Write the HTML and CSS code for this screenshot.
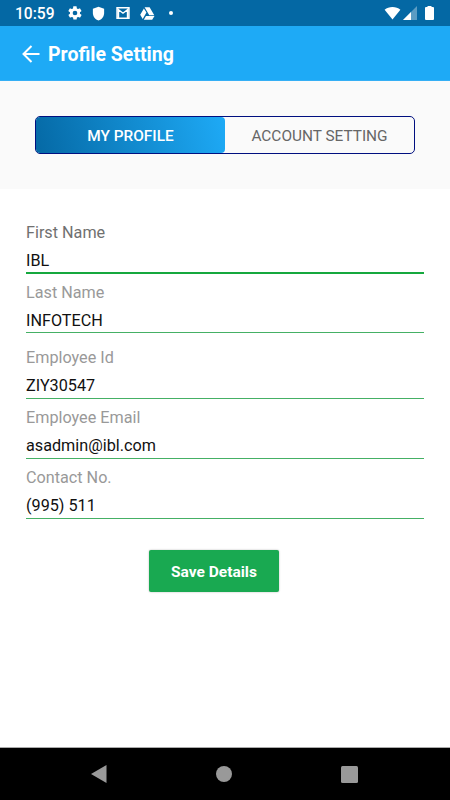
FILE: index.html
```html
<!DOCTYPE html>
<html lang="en">
    <head>
        <meta charset="utf-8" />
        <title>Profile Setting</title>
        <meta name="viewport" content="width=device-width, initial-scale=1.0" />
        <link rel="stylesheet" href="styles.css">
    </head>
    <body>
        <div class="statusBar">
            <span class="time">10:59</span>
            <div class="notifications">
                <svg class="gear" width="16" height="16" viewBox="0 0 24 24">
                    <path d="M19.4 13c0-.3.1-.6.1-1s0-.7-.1-1l2.1-1.6c.2-.2.2-.4.1-.6l-2-3.5c-.1-.2-.4-.3-.6-.2l-2.5 1c-.5-.4-1.1-.7-1.7-1l-.4-2.6c0-.3-.2-.5-.5-.5h-4c-.3 0-.5.2-.5.4L9 5.1c-.6.2-1.2.6-1.7 1l-2.5-1c-.2-.1-.5 0-.6.2l-2 3.5c-.1.2-.1.5.1.6L4.5 11c0 .3-.1.6-.1 1s0 .7.1 1l-2.1 1.6c-.2.2-.2.4-.1.6l2 3.5c.1.2.4.3.6.2l2.5-1c.5.4 1.1.7 1.7 1l.4 2.6c0 .2.2.4.5.4h4c.3 0 .5-.2.5-.4l.4-2.6c.6-.3 1.2-.6 1.7-1l2.5 1c.2.1.5 0 .6-.2l2-3.5c.1-.2.1-.5-.1-.6zM12 15.5a3.5 3.5 0 1 1 0-7 3.5 3.5 0 0 1 0 7z" fill-rule="evenodd" />
                </svg>
                <svg class="shield" width="15" height="15" viewBox="0 0 24 24">
                    <path d="M12 1 3 4.5V11c0 5.6 3.8 10.7 9 12 5.2-1.300 9-6.400 9-12V4.500z" />
                </svg>
                <svg class="mail" width="14" height="12" viewBox="0 0 14 12">
                    <path d="M1 .8h12v10.4H1zM2.500 11V2.600L7 6.200l4.500-3.600V11" />
                </svg>
                <svg class="drive" width="15" height="13" viewBox="0 0 15 13">
                    <path d="M4.6.3h5l4.700 7.900h-5zM3.900 1.400l2.500 4.200L2.700 12 .2 7.800zM6 9.100h8.500L12.200 12.800H3.800z" />
                </svg>
                <span class="dot"></span>
            </div>
            <div class="indicators">
                <svg class="wifi" width="17" height="13" viewBox="0 0 17 14">
                    <path d="M0 3C2.3 1 5.2 0 8.5 0S14.7 1 17 3L8.5 13.5z" />
                </svg>
                <svg class="signal" width="14" height="14" viewBox="0 0 14 14">
                    <path d="M14 0v14H0z" opacity=".35" />
                    <path d="M8 6v8H0z" />
                </svg>
                <svg class="battery" width="9" height="14" viewBox="0 0 9 14">
                    <path d="M2.5 0h4v1H8q1 0 1 1V13q0 1-1 1H1q-1 0-1-1V2q0-1 1-1h1.5z" />
                </svg>
            </div>
        </div>

        <div class="appBar">
            <svg class="back" width="18" height="18" viewBox="0 0 18 18">
                <path d="M17.5 9H1.5M9.5 1 1.5 9l8 8" />
            </svg>
            <h1>Profile Setting</h1>
        </div>

        <div class="tabArea">
            <div class="tabs">
                <div class="tab active">MY PROFILE</div>
                <div class="tab">ACCOUNT SETTING</div>
            </div>
        </div>

        <form class="form">
            <div class="field focused">
                <label for="firstName">First Name</label>
                <input type="text" id="firstName" value="IBL" />
            </div>
            <div class="field">
                <label for="lastName">Last Name</label>
                <input type="text" id="lastName" class="lastName" value="INFOTECH" />
            </div>
            <div class="field spaced">
                <label for="employeeId">Employee Id</label>
                <input type="text" id="employeeId" value="ZIY30547" />
            </div>
            <div class="field">
                <label for="email">Employee Email</label>
                <input type="text" id="email" value="asadmin@ibl.com" />
            </div>
            <div class="field">
                <label for="contact">Contact No.</label>
                <input type="text" id="contact" value="(995) 511" />
            </div>
            <button type="button" class="save">Save Details</button>
        </form>

        <div class="navBar">
            <svg width="16" height="18" viewBox="0 0 16 18">
                <path d="M15.5 0v18L0 9z" />
            </svg>
            <svg width="16" height="16" viewBox="0 0 16 16">
                <circle cx="8" cy="8" r="8" />
            </svg>
            <svg width="17" height="17" viewBox="0 0 17 17">
                <rect width="17" height="17" rx="1.5" />
            </svg>
        </div>
    </body>
</html>
```
FILE: styles.css
```css
* {
    box-sizing: border-box;
}

body {
    margin: 0;
    height: 800px;
    display: flex;
    flex-direction: column;
    background: #fff;
    font-family: Roboto, sans-serif;
    font-size: 16.2px;
    overflow: hidden;
}

svg {
    display: block;
    flex: none;
}

.statusBar {
    height: 26px;
    padding: 0 16px 0 15px;
    display: flex;
    align-items: center;
    background: #0468a4;
    color: #fff;
    fill: #fff;
}

.time {
    width: 51.5px;
    font-size: 15.6px;
    font-weight: 500;
    line-height: 26px;
    padding-top: 2px;
    white-space: nowrap;
}

.notifications {
    display: flex;
    align-items: center;
}

.shield {
    margin-left: 8px;
}

.mail {
    margin-left: 10px;
    fill: none;
    stroke: #fff;
    stroke-width: 1.4;
}

.drive {
    margin-left: 10px;
}

.dot {
    width: 4px;
    height: 4px;
    margin-left: 14px;
    border-radius: 50%;
    background: #fff;
}

.indicators {
    margin-left: auto;
    display: flex;
    align-items: center;
}

.signal {
    margin-left: 2px;
}

.battery {
    margin-left: 8px;
}

.appBar {
    height: 55px;
    padding: 1px 0 0 22px;
    display: flex;
    align-items: center;
    background: #1eaaf6;
    border-bottom: 1px solid #35aff5;
    color: #fff;
}

.back {
    fill: none;
    stroke: #fff;
    stroke-width: 2;
}

.appBar h1 {
    margin: 2px 0 0 8px;
    font-size: 19.5px;
    font-weight: 700;
}

.tabArea {
    height: 108px;
    padding: 35px;
    background: #fafafa;
}

.tabs {
    height: 38px;
    display: flex;
    border: 1px solid #000f80;
    border-radius: 5px;
}

.tab {
    flex: 1;
    display: flex;
    align-items: center;
    justify-content: center;
    padding-top: 1px;
    color: #666;
    font-size: 15.4px;
}

.tab.active {
    background: linear-gradient(75deg, #0569a5, #1eaaf6);
    border-radius: 4px;
    color: #fff;
    font-weight: 500;
}

.form {
    flex: 1;
    padding: 30px 26px 0;
    display: flex;
    flex-direction: column;
}

.field {
    height: 60px;
    display: flex;
    flex-direction: column;
}

.field label {
    height: 28px;
    line-height: 28px;
    color: #999;
}

.field input {
    width: 100%;
    height: 27px;
    padding: 1px 0 0;
    border: 0;
    border-bottom: 1px solid #45b065;
    outline: 0;
    background: none;
    color: #111;
    font: inherit;
}

.field .lastName {
    height: 26px;
}

.field.focused label {
    color: #707070;
}

.field.focused input {
    height: 27px;
    padding-top: 2px;
    border-bottom: 2px solid #15a83e;
}

.field.spaced {
    margin-top: 5px;
}

.save {
    align-self: center;
    width: 130px;
    height: 42px;
    margin: 26px 22px 0 0;
    padding: 2px 0 0;
    border: 0;
    border-radius: 2px;
    background: #19a951;
    box-shadow: 0 0 2px rgba(0, 0, 0, 0.3);
    color: #fff;
    font-family: inherit;
    font-size: 15.5px;
    font-weight: 700;
}

.navBar {
    height: 53px;
    padding: 0 92px 0 91px;
    display: flex;
    align-items: center;
    justify-content: space-between;
    border-top: 1px solid #aaa;
    background: #000;
    fill: #999;
}
```
